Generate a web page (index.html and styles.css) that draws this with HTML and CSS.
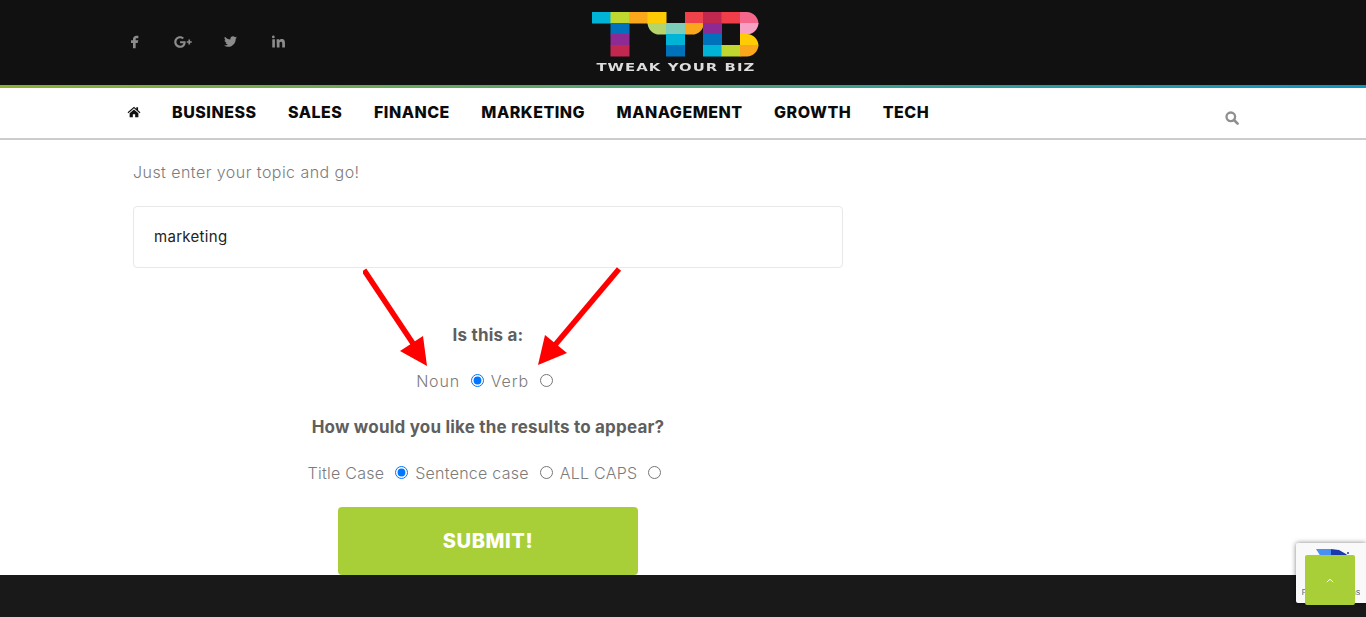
FILE: index.html
```html
<!DOCTYPE html>
<html lang="en">
  <head>
    <meta charset="UTF-8" />
    <meta name="viewport" content="width=device-width, initial-scale=1.0" />
    <title>Tweak Your Biz</title>
    <link rel="stylesheet" href="styles.css">
  </head>
  <body>
    <header class="topBar">
      <div class="social">
        <a href="#" class="socialFb"><svg viewBox="0 1.5 24 24" width="16" height="16"><path d="M14 8h3V4h-3c-2.8 0-5 2.2-5 5v2H6v4h3v8h4v-8h3l1-4h-4V9c0-.6.4-1 1-1z"/></svg></a>
        <a href="#" class="socialGp"><svg viewBox="0 0 23 24" width="20" height="20"><path d="M8 11v2.4h4c-.2 1-1.2 3-4 3-2.4 0-4.4-2-4.4-4.4S5.6 7.6 8 7.6c1.4 0 2.3.6 2.8 1.1l1.9-1.8C11.5 5.7 9.9 5 8 5 4.1 5 1 8.1 1 12s3.1 7 7 7c4 0 6.7-2.8 6.7-6.8 0-.5 0-.8-.1-1.2H8zm14 0h-2V9h-2v2h-2v2h2v2h2v-2h2z"/></svg></a>
        <a href="#" class="socialTw"><svg viewBox="0 0 24 24" width="13" height="13"><path d="M23.953 4.57a10 10 0 01-2.825.775 4.958 4.958 0 002.163-2.723c-.951.555-2.005.959-3.127 1.184a4.92 4.92 0 00-8.384 4.482C7.69 8.095 4.067 6.13 1.64 3.162a4.822 4.822 0 00-.666 2.475c0 1.71.87 3.213 2.188 4.096a4.904 4.904 0 01-2.228-.616v.06a4.923 4.923 0 003.946 4.827 4.996 4.996 0 01-2.212.085 4.936 4.936 0 004.604 3.417 9.867 9.867 0 01-6.102 2.105c-.39 0-.779-.023-1.17-.067a13.995 13.995 0 007.557 2.209c9.053 0 13.998-7.496 13.998-13.985 0-.21 0-.42-.015-.63A9.935 9.935 0 0024 4.59z"/></svg></a>
        <a href="#" class="socialIn"><svg viewBox="0 0 24 24" width="13" height="13"><path d="M4.98 3.5a2.5 2.5 0 11-5 0 2.5 2.5 0 015 0zM.5 8h4.9v15H.5zM8.5 8h4.7v2.1c.7-1.2 2.3-2.5 4.7-2.5 5 0 6 3.3 6 7.6V23h-5v-6.9c0-1.7 0-3.8-2.3-3.8s-2.7 1.8-2.7 3.7V23h-5z"/></svg></a>
      </div>
      <a href="#" class="logo">
        <svg class="logoMark" viewBox="0 0 167 45" width="167" height="45">
          <rect x="0" y="0" width="19" height="11.5" fill="#00b4d8"/>
          <rect x="18.5" y="0" width="19" height="11.5" fill="#c0d72f"/>
          <rect x="37" y="0" width="19" height="11.5" fill="#fba71b"/>
          <rect x="55.5" y="0" width="19" height="11.5" fill="#ffcb05"/>
          <rect x="93" y="0" width="19" height="11.5" fill="#f0424a"/>
          <rect x="111" y="0" width="19" height="11.5" fill="#c2274f"/>
          <rect x="129.5" y="0" width="19" height="11.5" fill="#ef3e4a"/>
          <path d="M148 0h7a12 12 0 0 1 11.5 11.5H148z" fill="#f4668a"/>
          <rect x="18.5" y="11" width="19" height="11.5" fill="#0072bc"/>
          <path d="M55.5 11h19v11.5h-7a12 12 0 0 1-12-11.5z" fill="#b5d56a"/>
          <rect x="74" y="11" width="19" height="11.5" fill="#7dcdbb"/>
          <path d="M93 11h19a12 12 0 0 1-12 11.5h-7z" fill="#fba71b"/>
          <rect x="111" y="11" width="19" height="11.5" fill="#8e2a94"/>
          <path d="M148 11h18.5a12 12 0 0 1-11.5 11.5h-7z" fill="#f7a1c4"/>
          <rect x="18.5" y="22" width="19" height="11.5" fill="#8e2a94"/>
          <rect x="74" y="22" width="19" height="11.5" fill="#00b4d8"/>
          <rect x="111" y="22" width="19" height="11.5" fill="#0072bc"/>
          <path d="M148 22h7a12 12 0 0 1 11.5 11.5H148z" fill="#ffcb05"/>
          <rect x="18.5" y="33" width="19" height="11.5" fill="#c2274f"/>
          <rect x="74" y="33" width="19" height="11.5" fill="#0072bc"/>
          <rect x="111" y="33" width="19" height="11.5" fill="#00b4d8"/>
          <rect x="129.5" y="33" width="19" height="11.5" fill="#c0d72f"/>
          <path d="M148 33h18.5a12 12 0 0 1-11.5 11.5h-7z" fill="#fba71b"/>
        </svg>
        <span class="logoText">TWEAK YOUR BIZ</span>
      </a>
    </header>
    <div class="stripe"></div>

    <nav class="mainNav">
      <a href="#" class="homeLink"><svg viewBox="0 0 24 24" width="14" height="14"><path d="M12 3 1 12.5l1.3 1.5L12 5.6l9.7 8.4 1.3-1.5-4-3.4V4h-3v2.6z"/><path d="M12 7.5 4.5 14v7h5.5v-5h4v5h5.5v-7z"/></svg></a>
      <a href="#" class="navItem">BUSINESS</a>
      <a href="#" class="navItem">SALES</a>
      <a href="#" class="navItem">FINANCE</a>
      <a href="#" class="navItem">MARKETING</a>
      <a href="#" class="navItem">MANAGEMENT</a>
      <a href="#" class="navItem">GROWTH</a>
      <a href="#" class="navItem">TECH</a>
      <a href="#" class="searchLink"><svg viewBox="0 0 14 14" width="14" height="14"><circle cx="5.8" cy="5.8" r="4.3" fill="none" stroke="#8f8f8f" stroke-width="2.3"/><path d="M9 9l3.6 3.6" stroke="#8f8f8f" stroke-width="2.6" stroke-linecap="round"/></svg></a>
    </nav>

    <main class="content">
      <form class="topicForm">
        <p class="intro">Just enter your topic and go!</p>
        <input class="topicInput" type="text" value="marketing" />

        <svg class="arrows" viewBox="0 0 300 110" width="300" height="110">
          <path d="M1 3 L51 78" stroke="#f00" stroke-width="5.5" fill="none"/>
          <path d="M37 84 L60 69 L64 99 Z" fill="#f00"/>
          <path d="M256 2 L192 78" stroke="#f00" stroke-width="5.5" fill="none"/>
          <path d="M182 68 L204 86 L175 98 Z" fill="#f00"/>
        </svg>

        <p class="question">Is this a:</p>
        <div class="choices choicesShort">
          <label>Noun</label><input type="radio" name="kind" checked />
          <label>Verb</label><input type="radio" name="kind" />
        </div>

        <p class="question">How would you like the results to appear?</p>
        <div class="choices">
          <label>Title Case</label><input type="radio" name="casing" checked />
          <label>Sentence case</label><input type="radio" name="casing" />
          <label>ALL CAPS</label><input type="radio" name="casing" />
        </div>

        <button class="submitBtn" type="button">SUBMIT!</button>
      </form>
    </main>

    <footer class="footer"></footer>

    <div class="recaptcha">
      <svg viewBox="0 0 60 30" width="60" height="30"><path d="M15 2h15v8H20z" fill="#4a90f0"/><path d="M30 2l8 1 7 4 3 3H30z" fill="#1c3aa9"/><circle cx="47" cy="6" r="1" fill="#1c3aa9"/></svg>
      <span class="recaptchaText">Privacy - Terms</span>
    </div>
    <a href="#" class="toTop"><svg viewBox="0 0 10 6" width="8" height="5"><path d="M1 5l4-3.6L9 5" fill="none" stroke="#fff" stroke-width="1.2"/></svg></a>
  </body>
</html>
```

FILE: styles.css
```css
html,
body {
  margin: 0;
  height: 100%;
}

body {
  display: flex;
  flex-direction: column;
  height: 617px;
  overflow: hidden;
  font-family: Inter, "Open Sans", sans-serif;
  background: #fff;
}

a {
  text-decoration: none;
  color: inherit;
}

.topBar {
  height: 85px;
  flex: none;
  background: #111;
  display: flex;
  position: relative;
}

.social {
  display: flex;
  align-items: center;
  padding-left: 127px;
  height: 83px;
}

.social svg {
  display: block;
  fill: #8c8c8c;
}

.socialGp {
  margin-left: 30px;
}

.socialTw {
  margin-left: 31px;
}

.socialIn {
  margin-left: 35px;
}

.logo {
  display: flex;
  flex-direction: column;
  align-items: center;
  margin-left: 307px;
  padding-top: 12px;
  width: 167px;
}

.logoMark {
  display: block;
  filter: blur(0.6px);
}

.logoText {
  margin-top: 4px;
  font-family: "DejaVu Sans", sans-serif;
  font-size: 11px;
  font-weight: 700;
  letter-spacing: 0.8px;
  color: #ddd;
  white-space: nowrap;
  transform: scaleX(1.35);
}

.stripe {
  height: 3px;
  flex: none;
  background: linear-gradient(to right, #8cb030, #0f95c4);
}

.mainNav {
  flex: none;
  display: flex;
  align-items: center;
  padding-left: 127px;
  border-bottom: 2px solid #ccc;
  padding-bottom: 2px;
  height: 48px;
}

.homeLink {
  width: 45px;
  display: block;
}

.homeLink svg {
  display: block;
  fill: #111;
}

.navItem {
  margin-right: 31.5px;
  font-size: 16px;
  font-weight: 800;
  color: #0b0b0b;
  letter-spacing: 0.5px;
  white-space: nowrap;
}

.searchLink {
  position: absolute;
  left: 1225px;
  top: 111px;
}

.searchLink svg {
  display: block;
}

.content {
  flex: 1;
  padding-left: 133px;
}

.topicForm {
  position: relative;
  width: 710px;
  text-align: center;
}

.intro {
  margin: 20px 0 22px;
  font-size: 16px;
  line-height: 24px;
  font-weight: 300;
  color: #7c7c7c;
  text-align: left;
  letter-spacing: 0.45px;
}

.topicInput {
  display: block;
  width: 100%;
  height: 62px;
  box-sizing: border-box;
  padding: 0 20px 2px;
  border: 1px solid #e8e8e8;
  border-radius: 4px;
  font-family: inherit;
  font-size: 15px;
  color: #222;
  letter-spacing: 0.3px;
}

.arrows {
  position: absolute;
  left: 230px;
  top: 107px;
}

.question {
  margin: 0;
  padding-top: 55px;
  font-size: 17px;
  line-height: 24px;
  font-weight: 700;
  color: #5f5f5f;
  letter-spacing: 0.2px;
}

.question ~ .question {
  padding-top: 22px;
}

.choices {
  display: flex;
  justify-content: center;
  align-items: center;
  height: 24px;
  margin-top: 22px;
  font-size: 16px;
  font-weight: 300;
  color: #7c7c7c;
  letter-spacing: 0.25px;
}

.choicesShort {
  letter-spacing: 0.8px;
}

.choices input {
  margin: 0 7px 2px 11px;
  width: 13px;
  height: 13px;
}

.submitBtn {
  display: block;
  width: 300px;
  height: 68px;
  margin: 22px auto 0;
  border: 0;
  border-radius: 4px;
  background: #a8cf38;
  color: #fff;
  font-family: inherit;
  font-size: 20px;
  font-weight: 800;
  letter-spacing: 0.6px;
  cursor: pointer;
}

.footer {
  height: 42px;
  flex: none;
  background: #191919;
}

.recaptcha {
  position: fixed;
  left: 1296px;
  top: 543px;
  width: 70px;
  height: 60px;
  box-sizing: border-box;
  padding-top: 4px;
  background: #f9f9f9;
  border-radius: 2px 0 0 2px;
  box-shadow: 0 0 5px rgba(0, 0, 0, 0.5);
  overflow: hidden;
  text-align: center;
}

.recaptcha svg {
  display: block;
  margin: 0 auto;
}

.recaptchaText {
  display: block;
  margin-top: 10px;
  font-family: "Liberation Sans", sans-serif;
  font-size: 8.5px;
  color: #666;
  white-space: nowrap;
}

.toTop {
  position: fixed;
  left: 1305px;
  top: 555px;
  width: 50px;
  height: 50px;
  display: flex;
  align-items: center;
  justify-content: center;
  background: #a8cf38;
  border-radius: 2px;
}
```
